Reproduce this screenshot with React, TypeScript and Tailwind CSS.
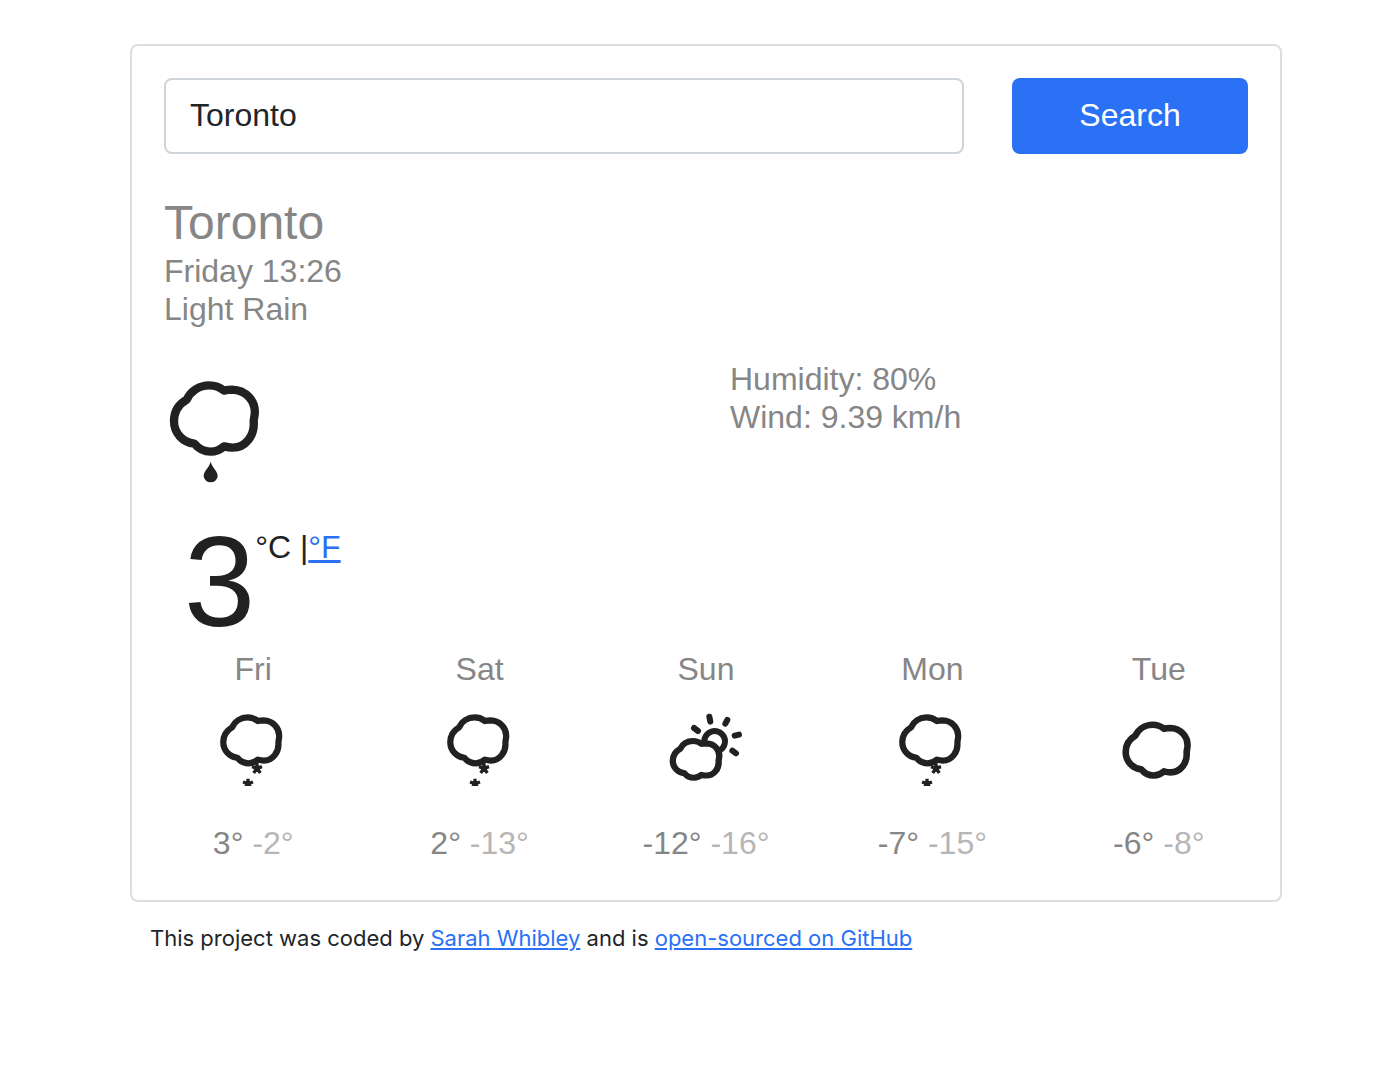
import React, { useState } from "react";

const CLOUD =
  "M110 104C122 78 148 61 178 61C196 61 210 67 222 77C230 75 238 74 246 74C288 75 318 108 314 148L311 168C315 212 286 248 248 248C240 248 232 247 222 244C210 255 198 260 182 260C163 260 146 252 133 236C98 232 72 204 72 168C72 141 86 118 110 104Z";

type Condition = "snow" | "partly" | "cloudy";

interface Day {
  name: string;
  max: number;
  min: number;
  condition: Condition;
}

const DAYS: Day[] = [
  { name: "Fri", max: 3, min: -2, condition: "snow" },
  { name: "Sat", max: 2, min: -13, condition: "snow" },
  { name: "Sun", max: -12, min: -16, condition: "partly" },
  { name: "Mon", max: -7, min: -15, condition: "snow" },
  { name: "Tue", max: -6, min: -8, condition: "cloudy" },
];

function Rain() {
  return (
    <svg
      className="h-[120px] w-[100px] text-[#212121]"
      viewBox="42 21 300 360"
      role="img"
      aria-label="Light Rain"
    >
      <path d={CLOUD} fill="none" stroke="currentColor" strokeWidth="25" strokeLinejoin="round" />
      <path
        d="M182 290C186 307 203 318 203 333A21 19 0 0 1 161 333C161 318 178 307 182 290Z"
        fill="currentColor"
      />
    </svg>
  );
}

function Flake({ x, y }: { x: number; y: number }) {
  return (
    <g transform={`translate(${x} ${y})`} stroke="currentColor" strokeWidth="10">
      <path d="M0 0V-15M0 0L15 -5M0 0L10 14M0 0L-10 14M0 0L-15 -5" />
      <circle r="9" fill="currentColor" stroke="none" />
    </g>
  );
}

function Snow() {
  return (
    <svg className="size-[100px]" viewBox="-8 0 300 300" fill="none" role="img" aria-label="Snow">
      <clipPath id="snow-area">
        <path d="M0 0H300V258H0Z" />
      </clipPath>
      <g clipPath="url(#snow-area)">
        <path
          d={CLOUD}
          transform="translate(3 10) scale(.692)"
          stroke="currentColor"
          strokeWidth="27"
          strokeLinejoin="round"
        />
        <Flake x={154} y={205} />
        <Flake x={127} y={251} />
      </g>
    </svg>
  );
}

function PartlyCloudy() {
  return (
    <svg
      className="size-[100px]"
      viewBox="3 0 300 300"
      fill="none"
      stroke="currentColor"
      role="img"
      aria-label="Partly cloudy"
    >
      <path
        d={CLOUD}
        transform="translate(12 89) scale(.575 .555)"
        strokeWidth="33"
        strokeLinejoin="round"
      />
      <path d="M149 132A31 31 0 1 1 196 150" strokeWidth="18" />
      <path
        d="M163 50L166 65M217 60L211 71M239 107L252 104M232 152L243 160M117 84L129 93"
        strokeWidth="18"
        strokeLinecap="round"
      />
    </svg>
  );
}

function Cloudy() {
  return (
    <svg className="size-[100px]" viewBox="12 0 300 300" fill="none" role="img" aria-label="Cloudy">
      <path
        d={CLOUD}
        transform="translate(7 27.5) scale(.765)"
        stroke="currentColor"
        strokeWidth="26"
        strokeLinejoin="round"
      />
    </svg>
  );
}

function ForecastIcon({ condition }: { condition: Condition }) {
  if (condition === "snow") return <Snow />;
  if (condition === "partly") return <PartlyCloudy />;
  return <Cloudy />;
}

export default function App() {
  const [query, setQuery] = useState("Toronto");

  return (
    <div className="min-h-screen bg-white pt-11 pl-5 font-['Liberation_Sans',Arial,sans-serif] text-[32px] leading-[38px] text-[#212529]">
      <div className="mx-auto max-w-[1152px]">
        <main className="rounded-lg border-2 border-[#dcdde1] px-8 pt-8 pb-[38px]">
          <form className="flex gap-12" onSubmit={(e) => e.preventDefault()}>
            <input
              type="search"
              aria-label="City"
              value={query}
              onChange={(e) => setQuery(e.target.value)}
              className="h-[76px] min-w-0 flex-1 appearance-none rounded-lg border-2 border-[#ced4da] px-6 pb-0.5 outline-none [&::-webkit-search-cancel-button]:hidden"
            />
            <button
              type="submit"
              className="h-[76px] w-[236px] rounded-lg bg-[#2a71f5] pb-0.5 text-white"
            >
              Search
            </button>
          </form>

          <header className="mt-10 text-[#868686]">
            <h1 className="text-[48px] leading-[58px]">Toronto</h1>
            <p>Friday 13:26</p>
            <p>Light Rain</p>
          </header>

          <section className="mt-8 grid grid-cols-2 gap-12" aria-label="Current weather">
            <div className="pt-3">
              <Rain />
              <div className="mt-[26px] flex pl-5 text-[#212121]">
                <span className="text-[128px] leading-[128px]">3</span>
                <span className="pt-[10px]">
                  °C |
                  <a href="#fahrenheit" className="text-[#2a71f5] underline">
                    °F
                  </a>
                </span>
              </div>
            </div>
            <div className="text-[#868686]">
              <p>Humidity: 80%</p>
              <p>Wind: 9.39 km/h</p>
            </div>
          </section>

          <section className="-mx-6 mt-1 grid grid-cols-5" aria-label="Forecast">
            {DAYS.map((day) => (
              <div key={day.name} className="flex flex-col items-center text-[#868686]">
                <h2>{day.name}</h2>
                <div className="mt-3 mb-6 text-[#212121]">
                  <ForecastIcon condition={day.condition} />
                </div>
                <p>
                  {day.max}° <span className="text-[#b6b6b6]">{day.min}°</span>
                </p>
              </div>
            ))}
          </section>
        </main>

        <footer className="mt-5 pl-5 font-['Inter',sans-serif] text-[22px] leading-8">
          This project was coded by{" "}
          <a href="#author" className="text-[#2a71f5] underline">
            Sarah Whibley
          </a>{" "}
          and is{" "}
          <a href="#source" className="text-[#2a71f5] underline">
            open-sourced on GitHub
          </a>
        </footer>
      </div>
    </div>
  );
}
